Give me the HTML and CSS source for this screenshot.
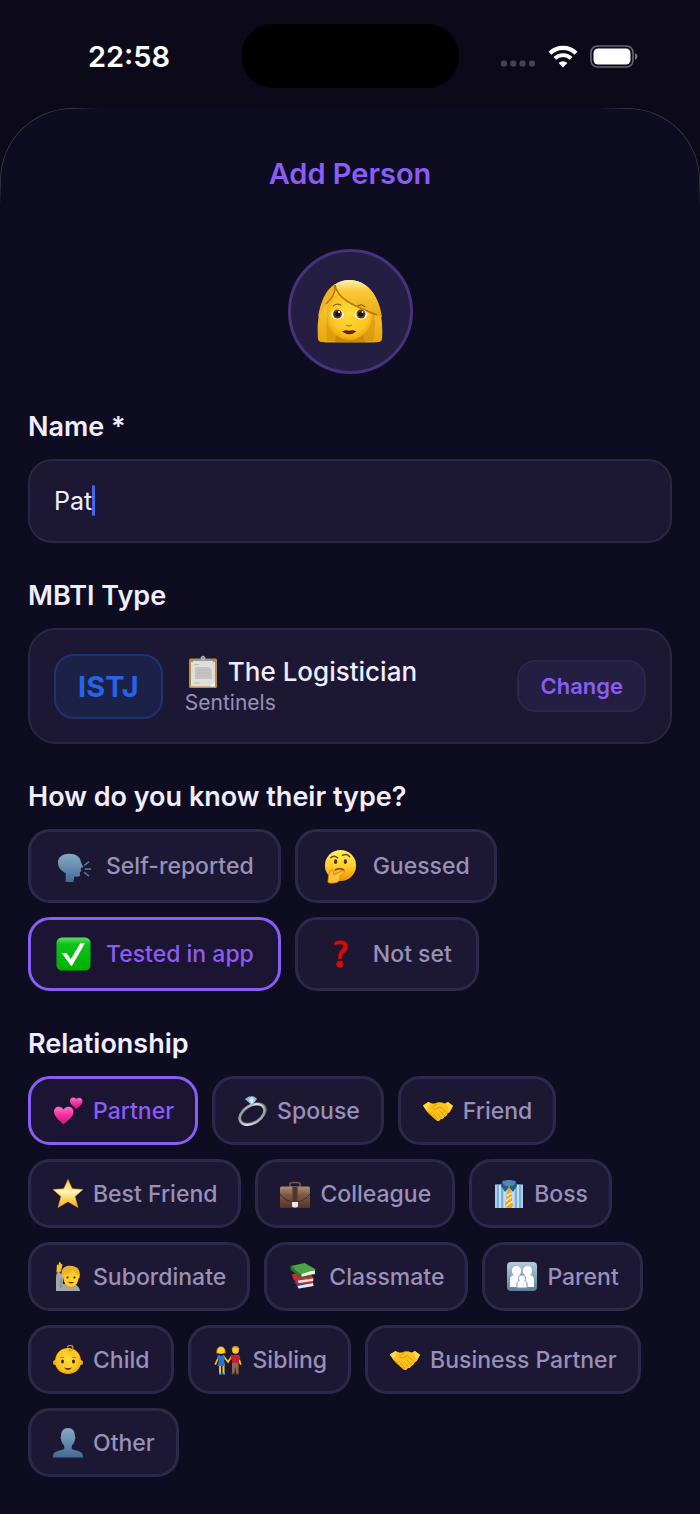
FILE: index.html
```
<!DOCTYPE html>
<html lang="en">
<head>
    <meta charset="UTF-8">
    <meta name="viewport" content="width=device-width, initial-scale=1.0">
    <title>Add Person</title>
    <link rel="stylesheet" href="styles.css">
</head>
<body>
    <!-- shared gradients and the handshake icon -->
    <svg class="defs" width="0" height="0" aria-hidden="true">
        <defs>
            <linearGradient id="hair" x1="0" y1="0" x2="0" y2="1">
                <stop offset="0" stop-color="#fff0b0"/>
                <stop offset="0.3" stop-color="#fbc93a"/>
                <stop offset="1" stop-color="#e9a70c"/>
            </linearGradient>
            <radialGradient id="skin" cx="0.5" cy="0.45" r="0.6">
                <stop offset="0" stop-color="#ffdc3e"/>
                <stop offset="0.7" stop-color="#fcc41f"/>
                <stop offset="1" stop-color="#e79a0b"/>
            </radialGradient>
            <linearGradient id="face" x1="0" y1="0" x2="0" y2="1">
                <stop offset="0" stop-color="#fff061"/>
                <stop offset="0.5" stop-color="#ffd02c"/>
                <stop offset="1" stop-color="#f28e0c"/>
            </linearGradient>
            <linearGradient id="steel" x1="0" y1="0" x2="0" y2="1">
                <stop offset="0" stop-color="#86a9c6"/>
                <stop offset="1" stop-color="#426b94"/>
            </linearGradient>
            <linearGradient id="green" x1="0" y1="0" x2="0" y2="1">
                <stop offset="0" stop-color="#5fe05c"/>
                <stop offset="0.2" stop-color="#0cc41a"/>
                <stop offset="1" stop-color="#00b000"/>
            </linearGradient>
            <linearGradient id="pink" x1="0" y1="0" x2="0" y2="1">
                <stop offset="0" stop-color="#ff74c0"/>
                <stop offset="0.5" stop-color="#f42d9f"/>
                <stop offset="1" stop-color="#c81a7c"/>
            </linearGradient>
            <linearGradient id="star" x1="0" y1="0" x2="0" y2="1">
                <stop offset="0" stop-color="#ffc93c"/>
                <stop offset="0.45" stop-color="#fff3b4"/>
                <stop offset="1" stop-color="#f9a912"/>
            </linearGradient>
            <linearGradient id="silver" x1="0" y1="0" x2="1" y2="1">
                <stop offset="0" stop-color="#777b80"/>
                <stop offset="0.5" stop-color="#e4e7e9"/>
                <stop offset="1" stop-color="#85898e"/>
            </linearGradient>
            <linearGradient id="leather" x1="0" y1="0" x2="0" y2="1">
                <stop offset="0" stop-color="#b08c74"/>
                <stop offset="0.4" stop-color="#7e5a45"/>
                <stop offset="1" stop-color="#533526"/>
            </linearGradient>
            <linearGradient id="sign" x1="0" y1="0" x2="0" y2="1">
                <stop offset="0" stop-color="#b4cbdc"/>
                <stop offset="1" stop-color="#5e7f98"/>
            </linearGradient>
            <symbol id="handshake" viewBox="0 0 30 30">
                <path d="M0 9.500 5.500 6c2.500 1.400 5 2 7.300 1 3-1.200 6.200-.6 8.700.4L25 6l5 4-3.200 6.300-2.300 1.200c-.3 2-1.500 3-3 3.200-.8 1.800-2 2.500-3.500 2.300-1.400 2.200-3.500 2.700-5 1l-7.500-6.500L3.500 15z" fill="#fcc21d"/>
                <path d="M0 9.500 5.500 6l1.700 1.200-3.700 7.300zM30 10l-5-4-1.700 1.200L26.700 15z" fill="#ffd84c"/>
                <path d="M13.800 7.200 10 11.500c.3 2.400 2.800 2 5 .3l2.500-.8 7 6.300M17 15l4.500 4.700M14.500 17.500l3.500 4M12 19.500l2.500 3.500M8 17.500l1.700-1.700M10 19.500l2-1.800" fill="none" stroke="#d08a0e" stroke-width="0.800" stroke-linecap="round"/>
                <path d="m4.500 15.500 9 8.500" stroke="#dc960f" stroke-width="0.900"/>
            </symbol>
        </defs>
    </svg>

    <header class="status-bar">
        <div class="status-side">
            <span class="clock">22:58</span>
        </div>
        <div class="island"></div>
        <div class="status-side">
            <svg class="signal" width="35" height="24" viewBox="0 0 35 24" fill="#45414f" aria-hidden="true">
                <rect x="0" y="16.500" width="6" height="6" rx="2"/>
                <rect x="9.300" y="16.500" width="6" height="6" rx="2"/>
                <rect x="18.600" y="16.500" width="6" height="6" rx="2"/>
                <rect x="28" y="16.500" width="6" height="6" rx="2"/>
            </svg>
            <svg class="wifi" width="30" height="24" viewBox="0 0 30 24" aria-hidden="true">
                <path d="M2 9.200a18.500 18.500 0 0 1 26 0" fill="none" stroke="#fff" stroke-width="4.200"/>
                <path d="M6.800 14.400a11.800 11.800 0 0 1 16.400 0" fill="none" stroke="#fff" stroke-width="3.900"/>
                <path d="m15 23.500-4.400-4.400a6.200 6.200 0 0 1 8.800 0z" fill="#fff"/>
            </svg>
            <svg class="battery" width="51" height="24" viewBox="0 0 51 24" aria-hidden="true">
                <rect x="1" y="2" width="42" height="21" rx="6.500" fill="none" stroke="#686572" stroke-width="1.600"/>
                <rect x="3.500" y="4.500" width="37" height="16" rx="4.500" fill="#fff"/>
                <path d="M45 9.300c3.200 1.200 3.200 5.200 0 6.400z" fill="#7d7a85"/>
            </svg>
        </div>
    </header>

    <main class="sheet">
        <h1>Add Person</h1>

        <button class="avatar" type="button" aria-label="Choose avatar">
            <svg width="66" height="66" viewBox="0 0 66 66">
                <path d="M1 60C-1 36 6 1 32 1c28 0 35 34 33 59-.2 3-3 3-8 3.500H9c-5-.5-7.800-.5-8-3.500z" fill="url(#hair)"/>
                <path d="M10 62c-2-20 1-33 6-41h36c6 10 8 24 4 41z" fill="#bd7d08" opacity=".35"/>
                <path d="M20 52h25l3 11H18z" fill="#cf8908"/>
                <path d="M10 36C9 24 16 14 27 12l24 12c5 5 5 13 3 20-2.500 9-12 17-21 17-10 0-20-8-22-16z" fill="url(#skin)"/>
                <path d="M18 7c5 16 23 22 47 31C62 16 50 1 32 1c-5 0-10 2-14 6z" fill="url(#hair)"/>
                <path d="M18 7c-1 12-9 19-17 31C4 21 9 11 18 5z" fill="#f1b321"/>
                <path d="M18 6c2 13 16 20 42 30" fill="none" stroke="#b57609" stroke-width="1.600"/>
                <path d="M18 6c1 8-3 13-9 19" fill="none" stroke="#a86c09" stroke-width="1.200"/>
                <path d="M16 27q4-3.500 8-1M41 26.500q4-2 7 1" fill="none" stroke="#79430c" stroke-width="1" stroke-linecap="round"/>
                <ellipse cx="20.500" cy="35.500" rx="6.300" ry="5" fill="#fffdef"/>
                <ellipse cx="44" cy="35.500" rx="6.300" ry="5" fill="#fffdef"/>
                <circle cx="20.500" cy="35" r="4.500" fill="#6a3b0d"/>
                <circle cx="44" cy="35" r="4.500" fill="#6a3b0d"/>
                <circle cx="20.500" cy="35" r="2.600" fill="#1d0e05"/>
                <circle cx="44" cy="35" r="2.600" fill="#1d0e05"/>
                <circle cx="22" cy="33" r="1" fill="#fff"/>
                <circle cx="45.500" cy="33" r="1" fill="#fff"/>
                <path d="M29.500 46q2.800 2 5.500 0" fill="none" stroke="#cb8507" stroke-width="1.500"/>
                <path d="M25 52.500q4-2 7.200-.7 3.200-1.300 7.200.7-7 5.500-14.400 0z" fill="#5a2410"/>
            </svg>
        </button>

        <section>
            <label class="field-label" for="name">Name *</label>
            <div class="name-field">
                <input type="text" id="name" name="name" value="Pat" autocomplete="off">
                <span class="caret"></span>
            </div>
        </section>

        <section>
            <h2 class="field-label">MBTI Type</h2>
            <div class="type-card">
                <span class="type-code">ISTJ</span>
                <div class="type-info">
                    <div class="type-name">
                        <svg width="30" height="34" viewBox="0 0 30 34" aria-hidden="true">
                            <rect x="1" y="3.500" width="28" height="29.500" rx="1.500" fill="#b98b45"/>
                            <path d="M3 7h24v24.500H3z" fill="#dededb"/>
                            <path d="M7 12h14l3 3v9H7z" fill="#c5c5c3"/>
                            <path d="M6 9.500h5M6 28h6M9 15h12M9 18h13M9 21h13" stroke="#b5b5b3" stroke-width="0.800"/>
                            <path d="m22 31.500 5-5v5z" fill="#f3f3f1"/>
                            <path d="M5 7V5.500L9 4h3.500a2.600 2.600 0 0 1 5 0H21l4 1.500V7z" fill="#8f9da6"/>
                            <path d="M5 6.500h20" stroke="#dae1e5"/>
                            <circle cx="15" cy="3" r="1.800" fill="none" stroke="#b7c4cc"/>
                        </svg>
                        <span>The Logistician</span>
                    </div>
                    <div class="type-group">Sentinels</div>
                </div>
                <button class="change-btn" type="button">Change</button>
            </div>
        </section>

        <section>
            <h2 class="field-label">How do you know their type?</h2>
            <div class="chips chips-large">
                <button class="chip" type="button">
                    <svg viewBox="0 0 36 36" aria-hidden="true">
                        <path d="M10 34V25C4 22 2 18 2 14 2 8 7 5 14 5c6 0 11 3 11.500 8l2.500 5.500-2.500 1.300.5 3-1.500 1.200.3 3c-.5 2-3 1.500-6 1.500l-.8 5.500z" fill="url(#steel)"/>
                        <path d="m29 17 5-4M29.500 20.500H36M29 24l5 4" stroke="#587e9f" stroke-width="1.500"/>
                    </svg>
                    Self-reported
                </button>
                <button class="chip" type="button">
                    <svg viewBox="0 0 36 36" aria-hidden="true">
                        <circle cx="18" cy="17" r="16" fill="url(#face)"/>
                        <path d="M8 9q3-3 7 0M20 6.500q5-2.500 7.500 1.500" fill="none" stroke="#754416" stroke-width="1.500" stroke-linecap="round"/>
                        <ellipse cx="13" cy="13" rx="1.700" ry="2.500" fill="#5a3211"/>
                        <ellipse cx="23" cy="13" rx="1.700" ry="2.500" fill="#5a3211"/>
                        <path d="M12.500 21.500q5-2.500 9 .2" fill="none" stroke="#754416" stroke-width="1.400" stroke-linecap="round"/>
                        <path d="M5 34c1 1.800 8 1.200 10 0 2.500-1.500 3-4 2.500-6l4-3.500c1.400-1.800-.2-2.800-1.800-2L11 26.500l-.5-3.700c-.3-2-2.500-2-3 0L6 26z" fill="#ffc238" stroke="#d8820e" stroke-width="0.900"/>
                    </svg>
                    Guessed
                </button>
                <button class="chip selected" type="button" aria-pressed="true">
                    <svg viewBox="0 0 36 36" aria-hidden="true">
                        <rect x="0.500" y="0.500" width="35" height="34" rx="5.500" fill="url(#green)"/>
                        <path d="M6 16.500h4.800l4.500 6L25 6.500h4.800L16.500 29.500h-1.200z" fill="#fff"/>
                    </svg>
                    Tested in app
                </button>
                <button class="chip" type="button">
                    <svg viewBox="0 0 36 36" aria-hidden="true">
                        <path d="M11.500 6.500C11.500 4.500 14.500 3.500 18 3.500c5 0 7.500 2.500 7.500 6.300 0 3.500-2 5-4 7-1.500 1.500-2.200 3.300-2.200 5.700h-3.600c-.3-4 .5-6.200 2.300-8.500 2-2.200 3-3.200 2.700-4.700-.3-2.300-5-2.300-8.700-.8z" fill="#e00606"/>
                        <circle cx="17.300" cy="28" r="3.500" fill="#e00606"/>
                    </svg>
                    Not set
                </button>
            </div>
        </section>

        <section>
            <h2 class="field-label">Relationship</h2>
            <div class="chips">
                <button class="chip selected" type="button" aria-pressed="true">
                    <svg viewBox="0 0 30 30" aria-hidden="true">
                        <path d="M10.500 28.500C6 24 1 20.500 1 15.500c0-5.500 7-6.500 9.500-2 3-4.500 10-3 10 2.500 0 5-5.500 8-10 12.500z" fill="url(#pink)"/>
                        <path d="M23.500 13C20.500 10.200 17 8.500 17 5 17 .5 22 .5 23.300 3.300 25.300.5 29.500 1.500 29.500 5.300c0 3.200-3.500 5-6 7.700z" fill="url(#pink)"/>
                    </svg>
                    Partner
                </button>
                <button class="chip" type="button">
                    <svg viewBox="0 0 30 30" aria-hidden="true">
                        <ellipse cx="15.500" cy="18" rx="14" ry="8.500" transform="rotate(-32 15.500 18)" fill="none" stroke="#696d72" stroke-width="3"/>
                        <ellipse cx="15" cy="18.500" rx="13.500" ry="8.800" transform="rotate(-32 15 18.500)" fill="none" stroke="url(#silver)" stroke-width="2.200"/>
                        <path d="m8 3 4-2.500h5L20 3l-5 6.500z" fill="#8dc9e8"/>
                        <path d="M8 3h12M11 3l4 6 2.500-6L15 .5z" fill="#e3f6ff" stroke="#649ebd" stroke-width="0.500"/>
                    </svg>
                    Spouse
                </button>
                <button class="chip" type="button">
                    <svg viewBox="0 0 30 30" aria-hidden="true"><use href="#handshake"/></svg>
                    Friend
                </button>
                <button class="chip" type="button">
                    <svg viewBox="0 0 30 30" aria-hidden="true">
                        <path d="m15 .5 4.200 9.200L30 10.500l-8 7 3 11-10-5.800-10 5.800 3-11-8-7 10.800-.8z" fill="url(#star)" stroke="#e8a51c" stroke-width="0.500" stroke-linejoin="round"/>
                    </svg>
                    Best Friend
                </button>
                <button class="chip" type="button">
                    <svg viewBox="0 0 30 30" aria-hidden="true">
                        <path d="M10 8V5.500c0-1.500 1-2 2.500-2h5c1.500 0 2.500.5 2.500 2V8" fill="none" stroke="#7a5741" stroke-width="1.500"/>
                        <rect y="7.500" width="30" height="21.500" rx="1.500" fill="url(#leather)"/>
                        <path d="M0 15q6 8 15 8t15-8" fill="none" stroke="#452b1e"/>
                        <path d="M12.500 8h5v15h-5z" fill="#533526"/>
                        <path d="M12 23h6v4.500l-2 1h-2l-2-1z" fill="#ece9e5"/>
                    </svg>
                    Colleague
                </button>
                <button class="chip" type="button">
                    <svg viewBox="0 0 30 30" aria-hidden="true">
                        <path d="M1 5.500h28V29H1z" fill="#a8d0f3"/>
                        <path d="M4 5.500V29M8 5.500V29M22 5.500V29M26 5.500V29" stroke="#5c98d2" stroke-width="1.200"/>
                        <path d="M6 5.500V29M24 5.500V29M11 8v21M19 8v21" stroke="#e1f2ff" stroke-width="0.900"/>
                        <path d="m12.500 8 2.500-2 2.500 2-.8 4L19 27l-2 2h-4l-2-2 2.300-15z" fill="#e7a727"/>
                        <path d="m12.800 17 4-3M12 22l5.500-4M12 27l6.500-5" stroke="#fff0bd" stroke-width="1.500"/>
                        <path d="M8 2.500 15 8l-4 5-4-6zM22 2.500 15 8l4 5 4-6z" fill="#235c8b"/>
                        <path d="M8 2.500C11 .5 19 .5 22 2.500L19 7h-8z" fill="#4a88b5"/>
                    </svg>
                    Boss
                </button>
                <button class="chip" type="button">
                    <svg viewBox="0 0 30 30" aria-hidden="true">
                        <path d="M3 29V16c0-4 1-6 3-6.500L10 14v8h10c4 1 6.500 3 7 7z" fill="#a4a7aa"/>
                        <path d="M3.500 10.500 3.800 4c0-2 1.200-2 1.500 0L6 .8c.5-1.300 1.700-.8 1.700.7L9.500 2.500 8 9.500z" fill="#fcc21d"/>
                        <path d="M8.500 14C7.500 7 12 3 18 4c7 0 10 5 8.500 12z" fill="#eeb129"/>
                        <path d="M14 21h8v3q-4 3-8 0z" fill="#d68d0e"/>
                        <path d="M10 13q7-1 10-5 2 4 6 5c0 7-3 12-8 12s-8-5-8-12z" fill="#ffcd2c"/>
                        <circle cx="14.500" cy="15.500" r="1.100" fill="#4c2809"/>
                        <circle cx="21.500" cy="15.500" r="1.100" fill="#4c2809"/>
                        <path d="M15 20q3 3 6 0z" fill="#78300e"/>
                        <path d="M8 17v9" stroke="#75797d"/>
                    </svg>
                    Subordinate
                </button>
                <button class="chip" type="button">
                    <svg viewBox="0 0 30 30" aria-hidden="true">
                        <path d="m5 20 17-2 3 6-15 3z" fill="#304292"/>
                        <path d="m8.500 24 15.500-3 .5 3-15 2.500z" fill="#e9e9e9"/>
                        <path d="m3 12 18-1 4 6-1 4-15 1.500-5-6z" fill="#c82c31"/>
                        <path d="m9 18.500 15-2v2.500L9.500 21z" fill="#eee6e3"/>
                        <path d="m2.500 6.500 10 8.500 13.500-3V8.500z" fill="#f1f1ec"/>
                        <path d="M2 4 15.500 1 27 7.500 12.500 12z" fill="#4da444"/>
                        <path d="M2 4v3.500L12.500 15.500 26.500 12" fill="none" stroke="#23712b" stroke-width="1.200"/>
                        <path d="m2 4 10.500 8v3.500L2.500 7.500z" fill="#297b31"/>
                    </svg>
                    Classmate
                </button>
                <button class="chip" type="button">
                    <svg viewBox="0 0 30 30" aria-hidden="true">
                        <rect width="30" height="29" rx="4" fill="url(#sign)"/>
                        <path d="M3 25V17c0-2.500 2-3.500 4-3.700C3.500 10.500 4.500 4 9.500 4s6 6.500 2.500 9.300c1.500.2 2.500 1 3 2 .5-1 1.500-1.800 3-2C14.500 10.500 15.500 4 20.500 4s6 6.500 2.500 9.300c2 .2 4 1.200 4 3.700v8z" fill="#fff"/>
                        <path d="M10 26v-4c0-2 1-3 2.300-3.300-2-3.700.2-5.700 2.700-5.700s4.700 2 2.700 5.700C19 19 20 20 20 22v4z" fill="#fff" stroke="#7894a8"/>
                    </svg>
                    Parent
                </button>
                <button class="chip" type="button">
                    <svg viewBox="0 0 30 30" aria-hidden="true">
                        <circle cx="2.500" cy="17.500" r="2.500" fill="#ecaa13"/>
                        <circle cx="27.500" cy="17.500" r="2.500" fill="#ecaa13"/>
                        <path d="M2 17C2 8 8 3 15 3s13 5 13 14c0 7-6 12-13 12S2 24 2 17z" fill="url(#skin)"/>
                        <path d="M14.500 2.500c0-3 5.500-3 5.500.5 0 2.500-3 3-4.500 2" fill="none" stroke="#d99214" stroke-width="1.300"/>
                        <ellipse cx="9.500" cy="16.500" rx="1.500" ry="1.900" fill="#42240a"/>
                        <ellipse cx="20.500" cy="16.500" rx="1.500" ry="1.900" fill="#42240a"/>
                        <path d="M7 13q2-1.500 4-.5M19 12.500q2-1 4 .5" fill="none" stroke="#a9650c" stroke-width="0.800"/>
                        <path d="M11 22.500q4 1.500 8 0-4 5-8 0z" fill="#5c210c"/>
                    </svg>
                    Child
                </button>
                <button class="chip" type="button">
                    <svg viewBox="0 0 30 30" aria-hidden="true">
                        <path d="m6 11-3.500 8M10.500 11l4.500 6 4-6M25 11l2.500 8" fill="none" stroke="#fcbf22" stroke-width="1.800" stroke-linecap="round"/>
                        <path d="M7 19v9M10.500 19v9" stroke="#fcbf22" stroke-width="2"/>
                        <path d="M6 28.500h2.500M9.500 28.500H12" stroke="#33b4d5" stroke-width="2"/>
                        <path d="m5 10 3 1 3-1 1 4-1 1 1.500 6h-8L6 15l-2-1z" fill="#2677c7"/>
                        <path d="M3.500 8.500C2.500-1 13.500-1 12.500 8.500z" fill="#df9f1e"/>
                        <circle cx="8" cy="5.500" r="3.300" fill="#ffd039"/>
                        <path d="M19 17h6.500v12H23l-.7-8-1 8H19z" fill="#8b6953"/>
                        <path d="m18 10.500 4-1 4.500 1 .8 4-1.800 1v2.500h-6.500v-3l-1.500-1z" fill="#c51f35"/>
                        <path d="M18.500 4.500c0-5 8-5 8 0z" fill="#bd8120"/>
                        <circle cx="22.500" cy="5.500" r="3.300" fill="#ffcb32"/>
                        <path d="M18.500 29h3M23 29h3" stroke="#533b2e" stroke-width="1.500"/>
                    </svg>
                    Sibling
                </button>
                <button class="chip" type="button">
                    <svg viewBox="0 0 30 30" aria-hidden="true"><use href="#handshake"/></svg>
                    Business Partner
                </button>
                <button class="chip" type="button">
                    <svg viewBox="0 0 30 30" aria-hidden="true">
                        <path d="M0 29.500c0-4 1-5.500 5-6.500l5-1.500c2-.7 1.500-3 .7-4.500C8.500 15 8.300 13 8 11c-1-1 0-2 0-2.500C8 3 10.500 0 15 0s7 3 7 8.500c0 .5 1 1.500 0 2.500-.3 2-.5 4-2.700 6-.8 1.500-1.300 3.800.7 4.500l5 1.500c4 1 5 2.500 5 6.500z" fill="url(#steel)"/>
                    </svg>
                    Other
                </button>
            </div>
        </section>
    </main>
</body>
</html>
```
FILE: styles.css
```
* {
    box-sizing: border-box;
}

body {
    margin: 0;
    min-height: 100vh;
    display: flex;
    flex-direction: column;
    font-family: Inter, "Liberation Sans", sans-serif;
    background-color: #0c0919;
    color: #f1edff;
}

h1,
h2 {
    margin: 0;
}

button,
input {
    font-family: inherit;
}

button {
    cursor: pointer;
}

.defs {
    position: absolute;
}

/* status bar */
.status-bar {
    display: grid;
    grid-template-columns: 1fr 218px 1fr;
    align-items: center;
    padding: 24px 17px 20px;
}

.status-side {
    display: flex;
    justify-content: center;
    align-items: center;
    gap: 12px;
}

.clock {
    padding-top: 2px;
    font-size: 29px;
    line-height: 36px;
    font-weight: 600;
    color: #fff;
}

.island {
    height: 64px;
    border-radius: 32px;
    background-color: #000;
}

/* sheet */
.sheet {
    position: relative;
    flex: 1;
    display: flex;
    flex-direction: column;
    gap: 34px;
    padding: 48px 28px 36px;
    border-radius: 72px 72px 0 0;
    background-color: #0e0c20;
}

/* hairline that only shows round the top corners */
.sheet::before {
    content: "";
    position: absolute;
    inset: 0 0 auto;
    height: 98px;
    border: 1px solid #3a3744;
    border-bottom: none;
    border-radius: 72px 72px 0 0;
    mask-image:
        linear-gradient(to right, #000 70px, transparent 100px, transparent calc(100% - 100px), #000 calc(100% - 70px)),
        linear-gradient(to bottom, #000 70px, transparent 98px);
    mask-composite: intersect;
    pointer-events: none;
}

h1 {
    margin-bottom: 23px;
    font-size: 29px;
    line-height: 36px;
    font-weight: 600;
    text-align: center;
    color: #8b5cf6;
}

.avatar {
    display: flex;
    justify-content: center;
    align-items: center;
    align-self: center;
    width: 125px;
    height: 125px;
    padding: 0;
    border: 3px solid #46327d;
    border-radius: 50%;
    background-color: #231e42;
}

.field-label {
    display: block;
    margin-bottom: 15px;
    padding-top: 2px;
    font-size: 27px;
    line-height: 34px;
    font-weight: 600;
}

.name-field {
    position: relative;
}

.name-field input {
    display: block;
    width: 100%;
    height: 84px;
    padding: 0 24px;
    border: 2px solid #2a2643;
    border-radius: 24px;
    outline: none;
    background-color: #1c1833;
    color: #f1edff;
    font-size: 25px;
}

.caret {
    position: absolute;
    top: 26px;
    left: 64px;
    width: 3px;
    height: 31px;
    border-radius: 2px;
    background-color: #3e68f0;
}

/* MBTI card */
.type-card {
    display: flex;
    align-items: center;
    gap: 22px;
    min-height: 116px;
    padding: 0 24px;
    border: 2px solid #2a2643;
    border-radius: 28px;
    background-color: #1c1833;
}

.type-code {
    padding: 14px 22px;
    border: 2px solid #1e3372;
    border-radius: 20px;
    background-color: #1c2148;
    color: #2563eb;
    font-size: 29px;
    line-height: 33px;
    font-weight: 700;
}

.type-info {
    flex: 1;
}

.type-name {
    display: flex;
    align-items: center;
    gap: 10px;
    padding-left: 3px;
    font-size: 26px;
    line-height: 34px;
    font-weight: 500;
}

.type-group {
    font-size: 21px;
    line-height: 28px;
    color: #9a90b8;
}

.change-btn {
    padding: 10px 21px;
    border: 2px solid #2a2643;
    border-radius: 18px;
    background-color: #231e42;
    color: #8b5cf6;
    font-size: 22px;
    line-height: 28px;
    font-weight: 600;
}

/* chips */
.chips {
    display: flex;
    flex-wrap: wrap;
    gap: 14px;
}

.chip {
    display: flex;
    align-items: center;
    gap: 10px;
    height: 69px;
    padding: 0 21px 0 22px;
    border: 3px solid #2d2849;
    border-radius: 22px;
    background-color: #1c1833;
    color: #9a90b8;
    font-size: 23px;
    line-height: 28px;
    font-weight: 500;
    white-space: nowrap;
}

.chip svg {
    width: 30px;
    height: 30px;
}

.chips-large .chip {
    gap: 15px;
    height: 74px;
    padding: 0 24px 0 25px;
}

.chips-large .chip svg {
    width: 35px;
    height: 35px;
}

.chip.selected {
    border-color: #8b5cf6;
    background-color: #1b1433;
    color: #8b5cf6;
}
```
